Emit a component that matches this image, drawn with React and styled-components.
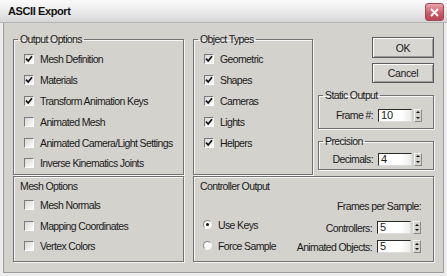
import React from 'react';
import styled, { createGlobalStyle } from 'styled-components';

const GlobalStyle = createGlobalStyle`
  html, body {
    margin: 0;
    padding: 0;
    background: #d4d2cd;
  }
  body {
    font-family: "Liberation Sans", Arial, sans-serif;
    font-size: 10.5px;
    letter-spacing: -0.62px;
    color: #1a1a1a;
  }
`;

const Window = styled.div`
  width: 447px;
  height: 276px;
  display: flex;
  flex-direction: column;
  background: #d4d2cd;
  overflow: hidden;
`;

const TitleBar = styled.div`
  height: 22px;
  flex: none;
  display: flex;
  align-items: center;
  justify-content: space-between;
  padding: 0 3px 0 8px;
  background: linear-gradient(#fbfbfb, #e9e9e9 55%, #d6d6d6);
  border-bottom: 1px solid #b4b4b4;
`;

const Title = styled.span`
  font-weight: bold;
  font-size: 11px;
  letter-spacing: -0.4px;
  color: #111;
`;

const CloseButton = styled.div`
  width: 17px;
  height: 16px;
  margin-top: 2px;
  border-radius: 3px;
  border: 1px solid #a04a58;
  background: linear-gradient(#eaa3ad, #c95869 60%, #b84556);
  display: flex;
  align-items: center;
  justify-content: center;
`;

const Body = styled.div`
  flex: 1;
  display: flex;
  flex-direction: column;
  gap: 1px;
  padding: 10px 10px 5px 10px;
  border-left: 3px solid #ededed;
  border-right: 3px solid #ededed;
  border-bottom: 3px solid #ededed;
  box-shadow: inset 1px 0 0 #9a9a9a, inset -1px 0 0 #9a9a9a, inset 0 -1px 0 #9a9a9a;
`;

const TopRow = styled.div`
  display: grid;
  grid-template-columns: 171px 9px 120px 5px 116px;
  height: 142px;

  & > :nth-child(1) { grid-column: 1; }
  & > :nth-child(2) { grid-column: 3; }
  & > :nth-child(3) { grid-column: 5; }
`;

const BottomRow = styled.div`
  display: grid;
  grid-template-columns: 171px 241px;
  column-gap: 9px;
  height: 86px;
`;

const Group = styled.fieldset`
  margin: 0;
  padding: 4px 0 0 10px;
  min-width: 0;
  border: 1px solid #707070;
  box-shadow: 1px 1px 0 #f6f6f6, inset 1px 1px 0 #f6f6f6;
  display: flex;
  flex-direction: column;
  ${(p) => p.$height && `height: ${p.$height}px;`}
  box-sizing: border-box;
`;

const Legend = styled.legend`
  margin-left: -6px;
  padding: 0 2px;
  line-height: 12px;
`;

const Box = styled.div`
  border: 1px solid #707070;
  box-shadow: 1px 1px 0 #f6f6f6, inset 1px 1px 0 #f6f6f6;
  padding: 3px ${(p) => p.$right || 11}px 0 6px;
  display: flex;
  flex-direction: column;
`;

const BoxTitle = styled.div`
  line-height: 12px;
`;

const OptionList = styled.div`
  display: flex;
  flex-direction: column;
  padding-left: ${(p) => p.$indent || 0}px;
  padding-top: ${(p) => p.$top || 0}px;
`;

const OptionRow = styled.label`
  height: ${(p) => p.$h || 20.8}px;
  display: flex;
  align-items: center;
  gap: 6px;
  white-space: nowrap;
`;

const CheckBox = styled.span`
  width: 10px;
  height: 10px;
  flex: none;
  box-sizing: border-box;
  border-top: 1px solid #7a7a7a;
  border-left: 1px solid #7a7a7a;
  border-bottom: 1px solid #ffffff;
  border-right: 1px solid #ffffff;
  background: linear-gradient(135deg, #d8d8d8, #fbfbfb);
  display: flex;
  align-items: center;
  justify-content: center;
`;

const Radio = styled.span`
  width: 9px;
  height: 9px;
  flex: none;
  border-radius: 50%;
  box-sizing: border-box;
  border: 1px solid #8a8a8a;
  border-right-color: #f4f4f4;
  border-bottom-color: #f4f4f4;
  background: #f8f8f8;
  display: flex;
  align-items: center;
  justify-content: center;

  &::after {
    content: '';
    width: 3px;
    height: 3px;
    border-radius: 50%;
    background: ${(p) => (p.$on ? '#111' : 'transparent')};
  }
`;

const RightColumn = styled.div`
  display: flex;
  flex-direction: column;
  align-items: stretch;
  padding-top: 4px;
`;

const Button = styled.button`
  align-self: flex-end;
  width: 62px;
  height: ${(p) => p.$h || 21}px;
  margin: 0 0 ${(p) => p.$after || 0}px 0;
  padding: 0;
  font-family: "Liberation Sans", Arial, sans-serif;
  font-size: 10.5px;
  letter-spacing: -0.4px;
  color: #1a1a1a;
  background: #d8d6d1;
  border: 1px solid #5c5c5c;
  box-shadow: inset 1px 1px 0 #ffffff, inset -1px -1px 0 #9a9a9a;
`;

const SpinnerRow = styled.div`
  display: flex;
  align-items: center;
  justify-content: flex-end;
  gap: 5px;
  height: ${(p) => p.$h || 19}px;
  padding-right: ${(p) => p.$right || 0}px;
  white-space: nowrap;
`;

const Field = styled.div`
  width: 34px;
  height: 13px;
  box-sizing: border-box;
  background: linear-gradient(90deg, #ffffff 70%, #ececec);
  border-top: 1px solid #2a2a2a;
  border-left: 1px solid #2a2a2a;
  border-right: 1px solid #dcdcdc;
  border-bottom: 1px solid #dcdcdc;
  padding-left: 2px;
  font-size: 11px;
  line-height: 11px;
  letter-spacing: 0;
`;

const Spin = styled.div`
  width: 8px;
  height: 13px;
  margin-left: -3px;
  box-sizing: border-box;
  border: 1px solid #8a8a8a;
  border-top-color: #f4f4f4;
  border-left-color: #f4f4f4;
  background: #d4d2cd;
  display: flex;
  flex-direction: column;
  align-items: center;
  justify-content: space-around;
`;

const Arrow = styled.span`
  width: 0;
  height: 0;
  border-left: 2px solid transparent;
  border-right: 2px solid transparent;
  ${(p) => (p.$down ? 'border-top: 2px solid #111;' : 'border-bottom: 2px solid #111;')}
`;

const ControllerBody = styled.div`
  display: flex;
  justify-content: space-between;
`;

const FramesHeader = styled.div`
  align-self: flex-end;
  margin-top: 8px;
  line-height: 12px;
`;

const Check = () => (
  <svg width="8" height="8" viewBox="0 0 8 8">
    <path d="M1 3.6 L3.2 6 L7 1.2" fill="none" stroke="#111" strokeWidth="1.7" />
  </svg>
);

const CheckOption = ({ checked, children, h }) => (
  <OptionRow $h={h}>
    <CheckBox>{checked && <Check />}</CheckBox>
    {children}
  </OptionRow>
);

const Spinner = ({ label, value, h, right }) => (
  <SpinnerRow $h={h} $right={right}>
    {label}
    <Field>{value}</Field>
    <Spin>
      <Arrow />
      <Arrow $down />
    </Spin>
  </SpinnerRow>
);

const outputOptions = [
  ['Mesh Definition', true],
  ['Materials', true],
  ['Transform Animation Keys', true],
  ['Animated Mesh', false],
  ['Animated Camera/Light Settings', false],
  ['Inverse Kinematics Joints', false],
];

const objectTypes = ['Geometric', 'Shapes', 'Cameras', 'Lights', 'Helpers'];

const meshOptions = ['Mesh Normals', 'Mapping Coordinates', 'Vertex Colors'];

export default function App() {
  return (
    <Window>
      <GlobalStyle />
      <TitleBar>
        <Title>ASCII Export</Title>
        <CloseButton>
          <svg width="9" height="9" viewBox="0 0 9 9">
            <path d="M1 1 L8 8 M8 1 L1 8" stroke="#fff" strokeWidth="1.8" />
          </svg>
        </CloseButton>
      </TitleBar>
      <Body>
        <TopRow>
          <Group>
            <Legend>Output Options</Legend>
            <OptionList>
              {outputOptions.map(([name, on]) => (
                <CheckOption key={name} checked={on}>{name}</CheckOption>
              ))}
            </OptionList>
          </Group>
          <Group>
            <Legend>Object Types</Legend>
            <OptionList>
              {objectTypes.map((name) => (
                <CheckOption key={name} checked>{name}</CheckOption>
              ))}
            </OptionList>
          </Group>
          <RightColumn>
            <Button $after={5}>OK</Button>
            <Button $h={20} $after={6}>Cancel</Button>
            <Group $height={40} style={{ marginBottom: 6 }}>
              <Legend>Static Output</Legend>
              <Spinner label="Frame #:" value="10" h={20} right={11} />
            </Group>
            <Group $height={35}>
              <Legend>Precision</Legend>
              <Spinner label="Decimals:" value="4" h={16} right={11} />
            </Group>
          </RightColumn>
        </TopRow>
        <BottomRow>
          <Box>
            <BoxTitle>Mesh Options</BoxTitle>
            <OptionList $indent={4} $top={3}>
              {meshOptions.map((name) => (
                <CheckOption key={name} h={20.5}>{name}</CheckOption>
              ))}
            </OptionList>
          </Box>
          <Box $right={12}>
            <BoxTitle>Controller Output</BoxTitle>
            <FramesHeader>Frames per Sample:</FramesHeader>
            <ControllerBody>
              <OptionList $indent={3} $top={2}>
                <OptionRow $h={21}>
                  <Radio $on />
                  Use Keys
                </OptionRow>
                <OptionRow $h={21}>
                  <Radio />
                  Force Sample
                </OptionRow>
              </OptionList>
              <OptionList $top={6}>
                <Spinner label="Controllers:" value="5" />
                <Spinner label="Animated Objects:" value="5" />
              </OptionList>
            </ControllerBody>
          </Box>
        </BottomRow>
      </Body>
    </Window>
  );
}
